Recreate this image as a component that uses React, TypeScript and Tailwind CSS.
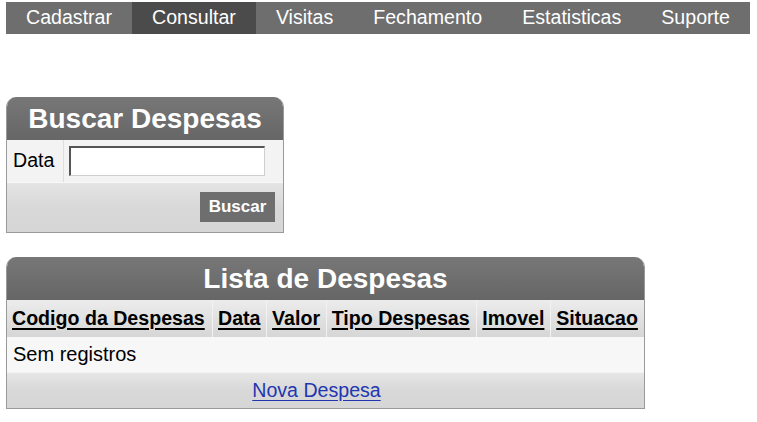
import React from "react";

const navItems = ["Cadastrar", "Consultar", "Visitas", "Fechamento", "Estatisticas", "Suporte"];
const cols = ["Codigo da Despesas", "Data", "Valor", "Tipo Despesas", "Imovel", "Situacao"];

export default function App() {
  return (
    <div
      className="min-h-[422px] w-[757px] bg-white pl-[6px] pt-[2px] text-[19.6px] text-black"
      style={{ fontFamily: '"Liberation Sans", Arial, sans-serif' }}
    >
      <nav className="inline-flex h-[32px] bg-[#6e6e6e]">
        {navItems.map((n) => (
          <div
            key={n}
            className={`flex items-center px-[20px] leading-none text-white ${
              n === "Consultar" ? "bg-[#4b4b4b]" : ""
            }`}
          >
            {n}
          </div>
        ))}
      </nav>

      <div className="mt-[63px] w-[278px] overflow-hidden rounded-t-[10px] border-x border-b border-[#9a9a9a]">
        <div className="flex h-[43px] items-center justify-center bg-gradient-to-b from-[#777777] to-[#666666] text-[28px] font-bold text-white">
          Buscar Despesas
        </div>
        <div className="flex h-[42px] bg-[#f3f3f3]">
          <div className="flex w-[57px] items-center border-r border-[#dedede] pl-[6px]">Data</div>
          <div className="flex items-center pl-[5px]">
            <div className="h-[30px] w-[196px] border-t-2 border-l-2 border-r border-b border-t-[#555] border-l-[#555] border-r-[#cfcfcf] border-b-[#cfcfcf] bg-white" />
          </div>
        </div>
        <div className="flex h-[50px] items-start justify-end border-t border-[#f8f8f8] bg-gradient-to-b from-[#e4e4e4] via-[#d8d8d8] to-[#d6d6d6] pr-[8px] pt-[9px]">
          <button className="flex h-[30px] w-[75px] items-center justify-center bg-[#6e6e6e] text-[17px] font-bold text-white">
            Buscar
          </button>
        </div>
      </div>

      <div className="mt-[24px] w-[639px] overflow-hidden rounded-t-[10px] border-x border-b border-[#9a9a9a]">
        <div className="flex h-[43px] items-center justify-center bg-gradient-to-b from-[#777777] to-[#666666] text-[28px] font-bold text-white">
          Lista de Despesas
        </div>
        <table className="w-full border-collapse">
          <thead>
            <tr className="h-[37px] bg-gradient-to-b from-[#ececec] to-[#d6d6d6]">
              {cols.map((c, i) => (
                <th
                  key={c}
                  className={`whitespace-nowrap px-[5px] text-left font-bold ${
                    i > 0 ? "border-l border-[#f2f2f2]" : ""
                  }`}
                >
                  <span className="underline decoration-[1.5px] underline-offset-[3px]">{c}</span>
                </th>
              ))}
            </tr>
          </thead>
          <tbody>
            <tr className="h-[35px] bg-[#f7f7f7]">
              <td colSpan={6} className="px-[6px] text-[20px]">
                Sem registros
              </td>
            </tr>
            <tr className="h-[36px] border-t border-[#f3f3f3] bg-gradient-to-b from-[#e6e6e6] via-[#d8d8d8] to-[#d6d6d6]">
              <td colSpan={6} className="pr-[18px] text-center">
                <a href="#" className="text-[#2236b0] underline underline-offset-[3px]">
                  Nova Despesa
                </a>
              </td>
            </tr>
          </tbody>
        </table>
      </div>
    </div>
  );
}
